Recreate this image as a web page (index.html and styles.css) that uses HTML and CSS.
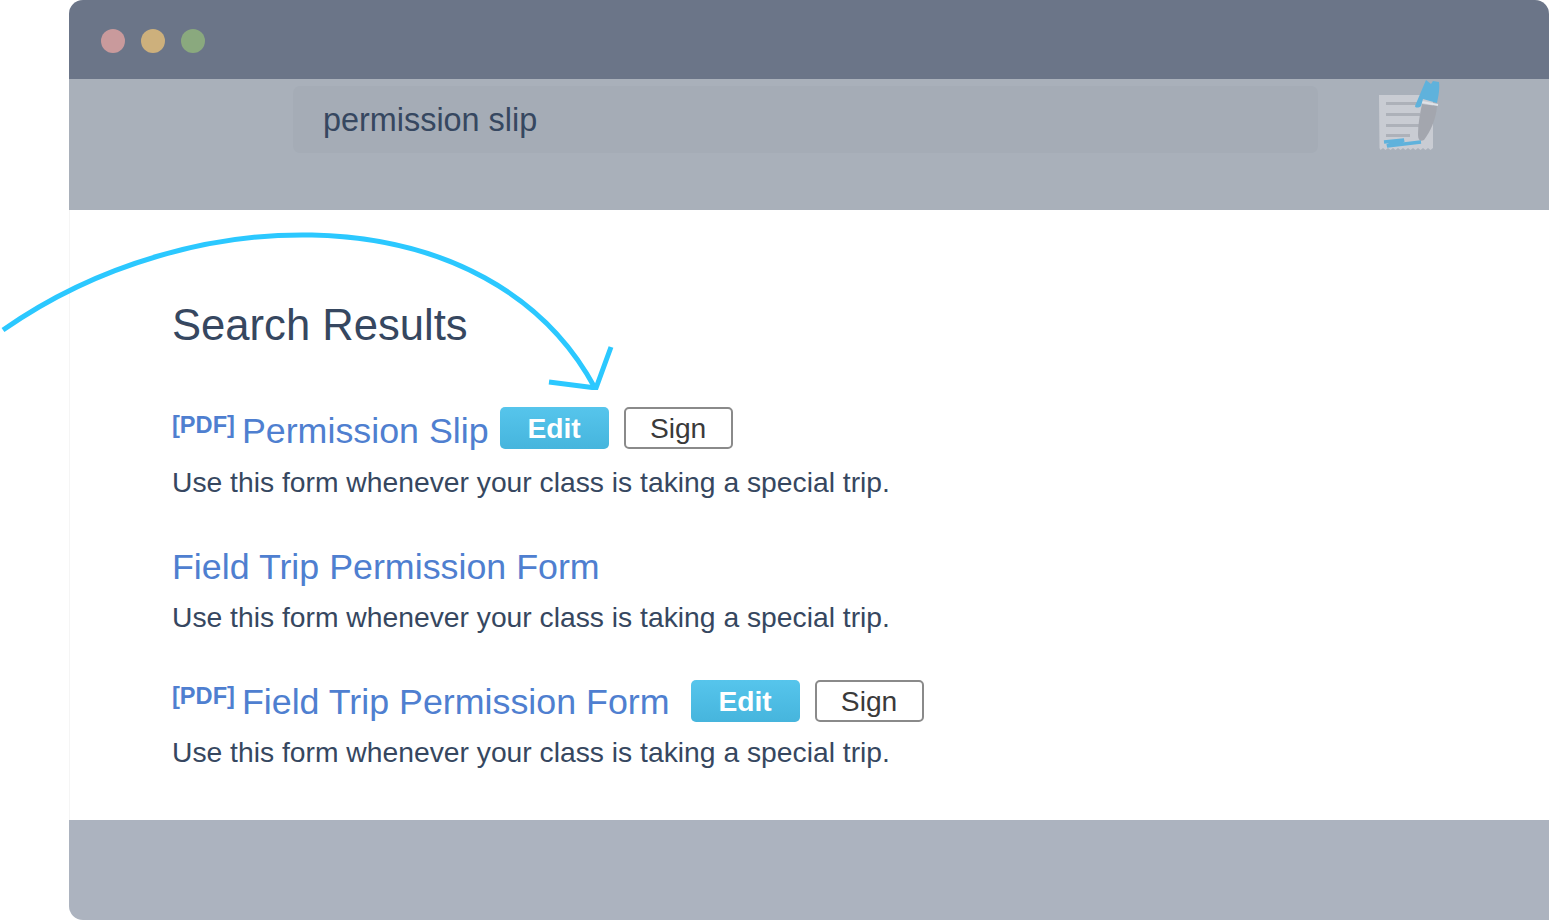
FILE: index.html
```html
<!DOCTYPE html>
<html lang="en">
<head>
<meta charset="utf-8">
<title>Search Results</title>
<link rel="stylesheet" href="styles.css">
</head>
<body>
<div class="window">
  <header class="titlebar">
    <span class="dot dot-red"></span>
    <span class="dot dot-yellow"></span>
    <span class="dot dot-green"></span>
  </header>
  <div class="nav">
    <div class="search">permission slip</div>
    <svg class="logo" width="64" height="72" viewBox="0 0 64 72">
      <path fill="#c9ccd3" d="M1 15H55V68l-2.500 2-2.500-2-2.500 2-2.500-2-2.500 2-2.500-2-2.500 2-2.500-2-2.500 2-2.500-2-2.500 2-2.500-2-2.500 2-2.500-2-2.500 2-2.500-2-2.500 2-2.500-2-2.500 2-2.500-2-2.500 2-1-2z"/>
      <g fill="#adb1b9">
        <rect x="8" y="22" width="34" height="3"/>
        <rect x="8" y="33" width="34" height="3"/>
        <rect x="8" y="44" width="34" height="3"/>
        <rect x="8" y="54" width="24" height="3"/>
      </g>
      <path fill="#a3a6ae" d="M44 24L59 26C58 40 52 52 46 60C42 62 40 60 40 54C40 44 42 34 44 24Z"/>
      <path fill="none" stroke="#dfe2e7" stroke-width="2" d="M44 22L60 25"/>
      <path fill="#5fb2dc" d="M37 26L48 0L53 4L55 1L61 2C62 10 60 18 59 23L45 19L43 26C41 28 37 28 37 26Z"/>
      <path fill="none" stroke="#5fb2dc" stroke-width="3.500" d="M6 62L26 60L9 66L43 62"/>
    </svg>
  </div>
  <main class="content">
    <h1 class="heading">Search Results</h1>
    <section class="result result-first">
      <div class="result-head">
        <span class="tag">[PDF]</span>
        <a class="title" href="#">Permission Slip</a>
        <span class="btn btn-edit btn-edit-first">Edit</span>
        <span class="btn btn-sign">Sign</span>
      </div>
      <p class="desc">Use this form whenever your class is taking a special trip.</p>
    </section>
    <section class="result">
      <div class="result-head">
        <a class="title" href="#">Field Trip Permission Form</a>
      </div>
      <p class="desc">Use this form whenever your class is taking a special trip.</p>
    </section>
    <section class="result">
      <div class="result-head">
        <span class="tag">[PDF]</span>
        <a class="title" href="#">Field Trip Permission Form</a>
        <span class="btn btn-edit btn-edit-last">Edit</span>
        <span class="btn btn-sign">Sign</span>
      </div>
      <p class="desc">Use this form whenever your class is taking a special trip.</p>
    </section>
  </main>
  <footer class="footer"></footer>
</div>
<svg class="arrow" width="620" height="170" viewBox="0 0 620 170">
  <path fill="none" stroke="#2bc8ff" stroke-width="5" d="M3 110C100 42 215 13 312 15C445 18 545 75 595 168"/>
  <path fill="none" stroke="#2bc8ff" stroke-width="5" d="M549 162L596 168L611 127"/>
</svg>
</body>
</html>
```
FILE: styles.css
```css
* { box-sizing: border-box; }
html, body { margin: 0; padding: 0; background: #fff; }
body {
  width: 1549px;
  height: 920px;
  overflow: hidden;
  font-family: "Liberation Sans", Arial, sans-serif;
  position: relative;
}
.window {
  margin-left: 69px;
  width: 1480px;
  height: 920px;
  border-radius: 14px 14px 0 14px;
  overflow: hidden;
  display: flex;
  flex-direction: column;
}
.titlebar {
  height: 79px;
  flex: none;
  background: #6b7588;
  display: flex;
  align-items: center;
  gap: 16px;
  padding: 3px 0 0 32px;
}
.dot { width: 24px; height: 24px; border-radius: 50%; }
.dot-red { background: #c99a9c; }
.dot-yellow { background: #cdb07c; }
.dot-green { background: #8aa97e; }
.nav {
  height: 131px;
  flex: none;
  background: #a9b0ba;
  display: flex;
  align-items: flex-start;
  padding: 7px 0 0 224px;
  gap: 60px;
}
.search {
  width: 1025px;
  height: 67px;
  background: #a5acb6;
  border-radius: 7px;
  padding-left: 30px;
  line-height: 68px;
  font-size: 32.4px;
  color: #364760;
}
.logo { margin-top: -6px; flex: none; filter: blur(0.4px); }
.content {
  flex: 1;
  background: #fff;
  border-left: 1px solid #f5f5f5;
  padding: 90px 0 0 102px;
  color: #364760;
}
.heading {
  margin: 0;
  font-size: 43.6px;
  font-weight: 400;
  line-height: 50px;
  color: #364760;
}
.result { margin-bottom: 40px; }
.result-first { margin-top: 54px; }
.result-head {
  height: 59px;
  display: flex;
  align-items: flex-start;
  white-space: nowrap;
}
.result-first .result-head { height: 60px; }
.tag {
  font-size: 23.6px;
  line-height: 28px;
  font-weight: 700;
  color: #4f7fd0;
  margin: 7px 7px 0 0;
}
.title {
  font-size: 35.8px;
  line-height: 46px;
  margin-top: 4px;
  color: #4f7fd0;
  text-decoration: none;
}
.btn {
  height: 42px;
  width: 109px;
  margin-top: 5px;
  border-radius: 5px;
  display: flex;
  align-items: center;
  justify-content: center;
  font-size: 28.2px;
  flex: none;
}
.result-first .btn { margin-top: 3px; }
.btn-edit {
  background: linear-gradient(#56c5ec, #46b5dd);
  color: #fff;
  font-weight: 700;
}
.btn-edit-first { margin-left: 11px; }
.btn-edit-last { margin-left: 21px; }
.btn-sign {
  margin-left: 15px;
  border: 2px solid #8a8a8a;
  color: #3a3a3a;
  background: #fff;
}
.desc {
  margin: 0;
  font-size: 28.28px;
  line-height: 36px;
  color: #364760;
}
.footer {
  height: 100px;
  flex: none;
  background: #acb3bf;
}
.arrow {
  position: absolute;
  left: 0;
  top: 220px;
}
```
